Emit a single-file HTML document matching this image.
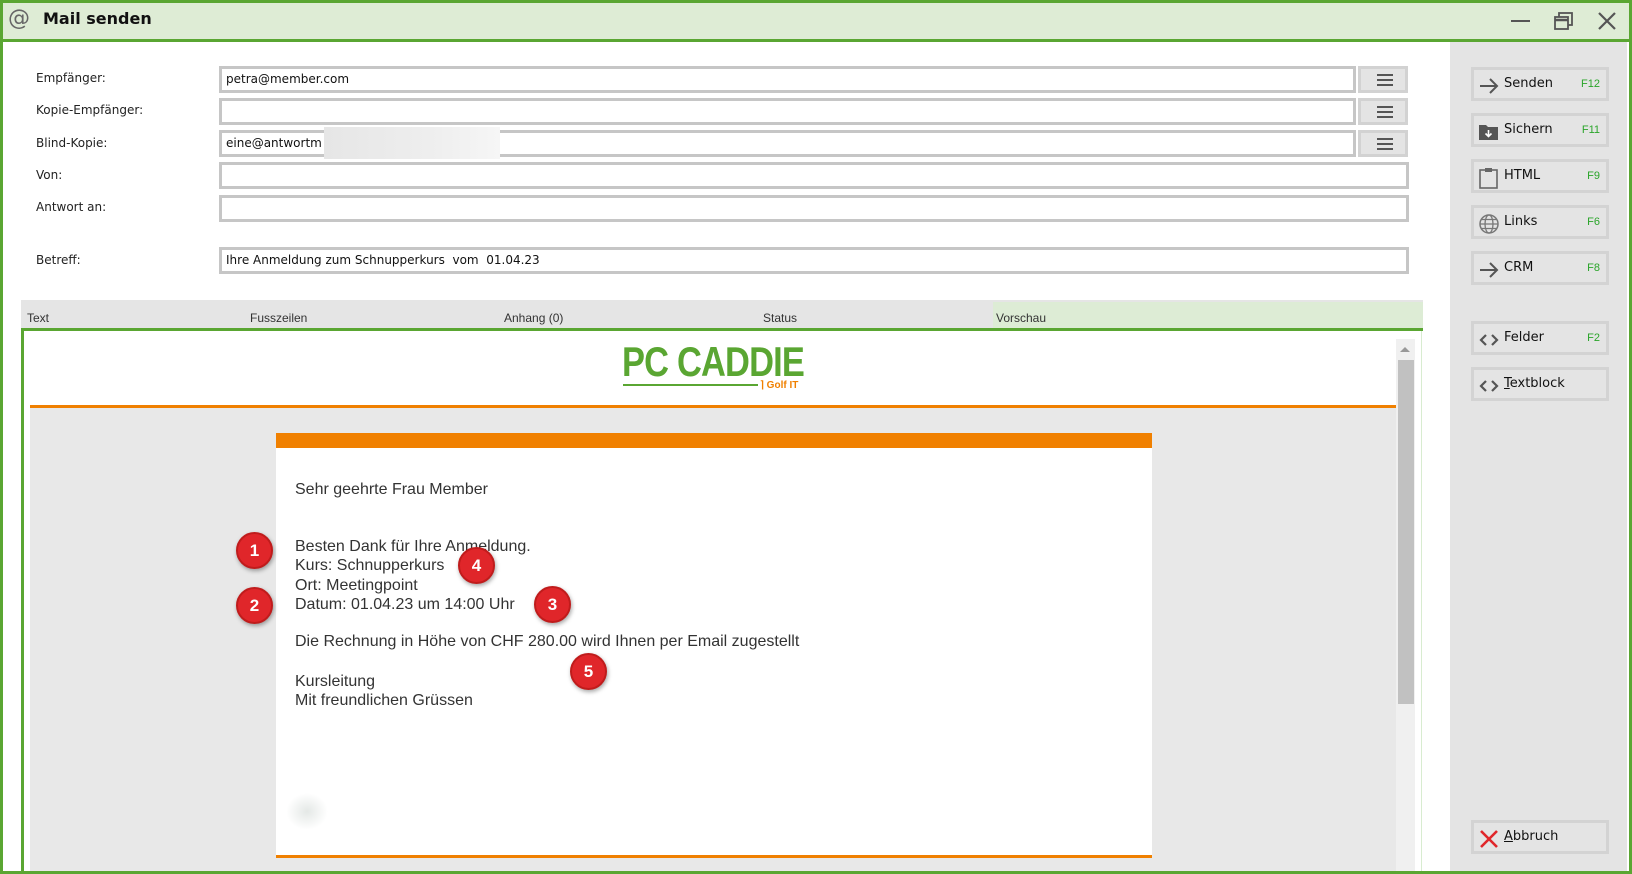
<!DOCTYPE html>
<html><head><meta charset="utf-8">
<style>
*{box-sizing:border-box;margin:0;padding:0}
body{width:1632px;height:874px;position:relative;overflow:hidden;background:#fff;font-family:"DejaVu Sans","Liberation Sans",sans-serif;font-size:12px;color:#222}
.a{position:absolute}
.lbl{position:absolute;left:36px;font-size:12px;color:#222}
.inp{position:absolute;left:219px;width:1137px;height:27px;border:3px solid #c6c6c6;background:#fff;font-size:12px;padding:3px 0 0 4px;color:#111}
.hb{position:absolute;left:1358px;width:50px;height:27px;background:#e4e4e4;border:3px solid #d2d2d2}
.hb i{position:absolute;left:16px;width:16px;height:2px;background:#555}
.btn{position:absolute;left:1471px;width:138px;height:34px;background:#e4e4e4;border:3px solid #d3d3d3;font-size:13px;color:#111}
.btn .t{position:absolute;left:30px;top:6px}
.btn .k{position:absolute;right:6px;top:8px;color:#2aa52a;font-size:11px;font-family:"Liberation Sans",sans-serif}
.btn svg{position:absolute;left:4px;top:5px}
.tab{position:absolute;top:311px;font-size:12px;font-family:"Liberation Sans",sans-serif;color:#333}
.mail{position:absolute;left:295px;font-family:"Liberation Sans",Arial,sans-serif;font-size:16px;color:#333}
.bd{position:absolute;width:37px;height:37px;border-radius:50%;background:#e0262a;border:2px solid #c01c1c;box-shadow:1px 2px 4px rgba(0,0,0,.35);color:#fff;font-family:"Liberation Sans",sans-serif;font-weight:bold;font-size:17px;text-align:center;line-height:33px}
</style></head><body>
<div class="a" style="left:0;top:0;width:1632px;height:874px;border:3px solid #5aa632"></div>
<div class="a" style="left:3px;top:3px;width:1626px;height:36px;background:#deecd5"></div>
<div class="a" style="left:0;top:39px;width:1632px;height:3px;background:#5aa632"></div>
<div class="a" style="left:8px;top:6px;font-size:22px;color:#666;font-family:'DejaVu Sans',sans-serif">@</div>
<div class="a" style="left:43px;top:9px;font-size:16px;font-weight:bold;color:#111">Mail senden</div>
<div class="a" style="left:1511px;top:20px;width:19px;height:2px;background:#555"></div>
<svg class="a" style="left:1554px;top:12px" width="20" height="18"><rect x="5" y="1" width="13" height="12" fill="none" stroke="#555" stroke-width="1.8"/><rect x="1" y="5" width="13" height="12" fill="#deecd5" stroke="#555" stroke-width="1.8"/><line x1="1" y1="8" x2="14" y2="8" stroke="#555" stroke-width="2.5"/></svg>
<svg class="a" style="left:1597px;top:12px" width="20" height="18"><path d="M2 1L18 17M18 1L2 17" stroke="#555" stroke-width="2.2"/></svg>

<div class="a" style="left:1450px;top:42px;width:177px;height:829px;background:#e4e4e4"></div>

<div class="lbl" style="top:71px">Empfänger:</div>
<div class="lbl" style="top:103px">Kopie-Empfänger:</div>
<div class="lbl" style="top:136px">Blind-Kopie:</div>
<div class="lbl" style="top:168px">Von:</div>
<div class="lbl" style="top:200px">Antwort an:</div>
<div class="lbl" style="top:253px">Betreff:</div>
<div class="inp" style="top:66px">petra@member.com</div>
<div class="inp" style="top:98px"></div>
<div class="inp" style="top:130px">eine@antwortm</div>
<div class="a" style="left:324px;top:127px;width:176px;height:32px;background:linear-gradient(90deg,#e6e6e6,#eeeeee 60%,#f6f6f6)"></div>
<div class="inp" style="top:162px;width:1190px"></div>
<div class="inp" style="top:195px;width:1190px"></div>
<div class="inp" style="top:247px;width:1190px">Ihre Anmeldung zum Schnupperkurs&nbsp; vom&nbsp; 01.04.23</div>
<div class="hb" style="top:66px"><i style="top:5px"></i><i style="top:10px"></i><i style="top:15px"></i></div>
<div class="hb" style="top:98px"><i style="top:5px"></i><i style="top:10px"></i><i style="top:15px"></i></div>
<div class="hb" style="top:130px"><i style="top:5px"></i><i style="top:10px"></i><i style="top:15px"></i></div>

<div class="a" style="left:21px;top:300px;width:1402px;height:29px;background:#e5e5e5"></div>
<div class="a" style="left:993px;top:302px;width:430px;height:27px;background:#ddecd5"></div>
<div class="a" style="left:21px;top:328px;width:1402px;height:3px;background:#5aa632"></div>
<div class="tab" style="left:27px">Text</div>
<div class="tab" style="left:250px">Fusszeilen</div>
<div class="tab" style="left:504px">Anhang (0)</div>
<div class="tab" style="left:763px">Status</div>
<div class="tab" style="left:996px">Vorschau</div>

<div class="a" style="left:21px;top:331px;width:3px;height:540px;background:#5aa632"></div>
<div class="a" style="left:1421px;top:331px;width:1px;height:540px;background:#d8ecd0"></div>
<div class="a" style="left:30px;top:331px;width:1366px;height:540px;background:#e8e8e8"></div>
<div class="a" style="left:30px;top:331px;width:1366px;height:74px;background:#fff"></div>
<div class="a" style="left:30px;top:405px;width:1366px;height:3px;background:#f08000"></div>
<div class="a" style="left:622px;top:340px;font-family:'Liberation Sans',sans-serif;font-weight:bold;font-size:42px;color:#5aa632;letter-spacing:-1px;line-height:44px;transform:scaleX(0.82);transform-origin:0 0;white-space:nowrap">PC CADDIE</div>
<div class="a" style="left:623px;top:384px;width:135px;height:2px;background:#5aa632"></div>
<div class="a" style="left:760px;top:380px;font-family:'Liberation Sans',sans-serif;font-weight:bold;font-size:10px;color:#f08000">⌉ Golf IT</div>
<div class="a" style="left:1396px;top:339px;width:19px;height:532px;background:#f0f0f0"></div>
<div class="a" style="left:1400px;top:347px;width:0;height:0;border-left:5px solid transparent;border-right:5px solid transparent;border-bottom:5px solid #999"></div>
<div class="a" style="left:1398px;top:360px;width:16px;height:344px;background:#c1c1c1"></div>

<div class="a" style="left:276px;top:433px;width:876px;height:425px;background:#fff"></div>
<div class="a" style="left:276px;top:433px;width:876px;height:15px;background:#f08000"></div>
<div class="a" style="left:276px;top:855px;width:876px;height:3px;background:#f08000"></div>
<div class="a" style="left:286px;top:793px;width:42px;height:37px;background:radial-gradient(#e4e8e6,#fff 70%)"></div>
<div class="mail" style="top:481px">Sehr geehrte Frau Member</div>
<div class="mail" style="top:537px;line-height:19.3px">Besten Dank für Ihre Anmeldung.<br>Kurs: Schnupperkurs<br>Ort: Meetingpoint<br>Datum: 01.04.23 um 14:00 Uhr</div>
<div class="mail" style="top:633px">Die Rechnung in Höhe von CHF 280.00 wird Ihnen per Email zugestellt</div>
<div class="mail" style="top:672px;line-height:19.3px">Kursleitung<br>Mit freundlichen Grüssen</div>
<div class="bd" style="left:236px;top:532px">1</div>
<div class="bd" style="left:236px;top:587px">2</div>
<div class="bd" style="left:534px;top:586px">3</div>
<div class="bd" style="left:458px;top:547px">4</div>
<div class="bd" style="left:570px;top:653px">5</div>

<div class="btn" style="top:67px"><svg width="22" height="22"><path d="M2 11H19M12 4L19 11L12 18" fill="none" stroke="#555" stroke-width="2"/></svg><span class="t">Senden</span><span class="k">F12</span></div>
<div class="btn" style="top:113px"><svg width="22" height="22"><path d="M1 4H8L10 6H20V19H1Z" fill="#555"/><path d="M10.5 9V15M7.5 12.5L10.5 15.5L13.5 12.5" stroke="#fff" stroke-width="1.6" fill="none"/></svg><span class="t">Sichern</span><span class="k">F11</span></div>
<div class="btn" style="top:159px"><svg width="22" height="22"><rect x="2" y="3" width="17" height="18" fill="none" stroke="#666" stroke-width="1.6"/><rect x="7" y="1" width="7" height="4" fill="#666"/></svg><span class="t">HTML</span><span class="k">F9</span></div>
<div class="btn" style="top:205px"><svg width="22" height="22"><circle cx="11" cy="11" r="9" fill="none" stroke="#777" stroke-width="1.5"/><ellipse cx="11" cy="11" rx="4" ry="9" fill="none" stroke="#777" stroke-width="1.3"/><path d="M2 11H20M3.5 6.5H18.5M3.5 15.5H18.5" stroke="#777" stroke-width="1.3"/></svg><span class="t">Links</span><span class="k">F6</span></div>
<div class="btn" style="top:251px"><svg width="22" height="22"><path d="M2 11H19M12 4L19 11L12 18" fill="none" stroke="#555" stroke-width="2"/></svg><span class="t">CRM</span><span class="k">F8</span></div>
<div class="btn" style="top:321px"><svg width="22" height="22"><path d="M8 6L3 11L8 16M14 6L19 11L14 16" fill="none" stroke="#555" stroke-width="2.2"/></svg><span class="t">Felder</span><span class="k">F2</span></div>
<div class="btn" style="top:367px"><svg width="22" height="22"><path d="M8 6L3 11L8 16M14 6L19 11L14 16" fill="none" stroke="#555" stroke-width="2.2"/></svg><span class="t"><u>T</u>extblock</span></div>
<div class="btn" style="top:820px"><svg width="22" height="22"><path d="M3 3L19 19M19 3L3 19" stroke="#e0262a" stroke-width="2.6"/></svg><span class="t"><u>A</u>bbruch</span></div>
</body></html>
